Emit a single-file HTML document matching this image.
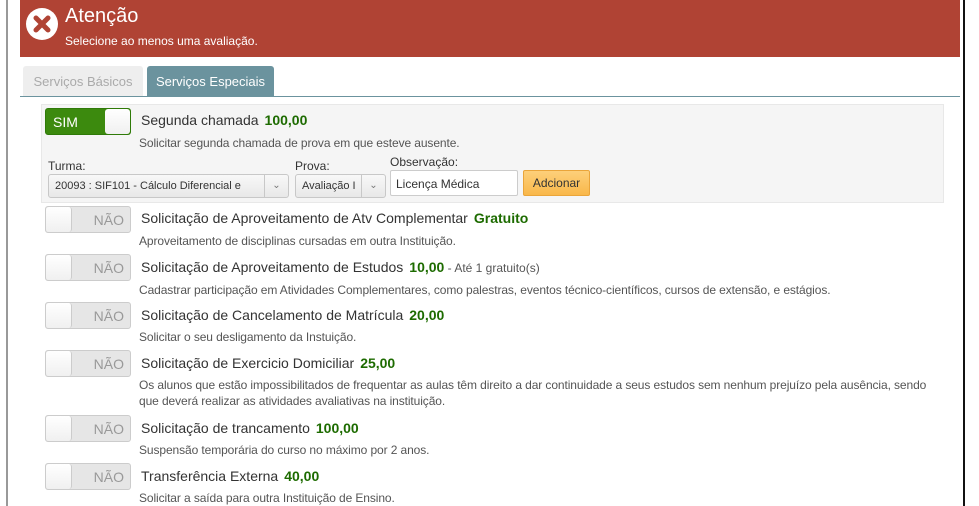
<!DOCTYPE html>
<html><head><meta charset="utf-8"><style>
*{margin:0;padding:0;box-sizing:border-box}
body{width:979px;height:506px;overflow:hidden;background:#fff;font-family:"Liberation Sans",sans-serif;position:relative;color:#333}
.a{position:absolute}
.t{font-size:14px;color:#333;white-space:nowrap}
.p{color:#1d6b00;font-weight:bold;margin-left:6px}
.d{font-size:12px;color:#555;white-space:nowrap;letter-spacing:-0.1px}
.tg{position:absolute;left:45px;width:86px;height:27px;border:1px solid #ccc;border-radius:3px;background:#e6e6e6}
.tg .k{position:absolute;left:0;top:0;width:26px;height:25px;background:linear-gradient(#fff,#f0f0f0);border-right:1px solid #ccc;border-radius:3px}
.tg span{position:absolute;right:6px;top:5px;font-size:14px;color:#999}
.sel{position:absolute;height:24px;border:1px solid #c8c8c8;border-radius:3px;background:linear-gradient(#f8f8f8,#e8e8e8);font-size:11px;color:#333;padding:5px 0 0 6px;white-space:nowrap;overflow:hidden}
.sel i{position:absolute;right:0;top:0;width:24px;height:22px;border-left:1px solid #c8c8c8;font-style:normal;color:#777;text-align:center;font-size:10px;line-height:22px}
</style></head><body>
<div class="a" style="left:6px;top:0;width:2px;height:506px;background:#999"></div>
<div class="a" style="left:963px;top:0;width:2px;height:506px;background:#111"></div>
<div class="a" style="left:20px;top:0;width:940px;height:57px;background:#b04334"></div>
<svg class="a" style="left:25px;top:7px" width="34" height="34" viewBox="0 0 34 34"><circle cx="17" cy="17" r="16" fill="#fff"/><path d="M11 11L23 23M23 11L11 23" stroke="#b04334" stroke-width="5" stroke-linecap="round"/></svg>
<div class="a" style="left:65px;top:5px;font-size:20px;color:#fff">Atenção</div>
<div class="a" style="left:65px;top:34px;font-size:12px;color:#fff">Selecione ao menos uma avaliação.</div>
<div class="a" style="left:23px;top:66px;width:120px;height:31px;background:#eee;border-radius:3px 3px 0 0;font-size:13px;color:#aaa;text-align:center;line-height:31px">Serviços Básicos</div>
<div class="a" style="left:147px;top:66px;width:127px;height:31px;background:#6b939e;border-radius:3px 3px 0 0;font-size:13px;color:#fff;text-align:center;line-height:31px">Serviços Especiais</div>
<div class="a" style="left:20px;top:96px;width:940px;height:1px;background:#6b939e"></div>
<div class="a" style="left:41px;top:104px;width:903px;height:99px;background:#f5f5f5;border:1px solid #e8e8e8"></div>
<div class="a" style="left:45px;top:108px;width:86px;height:27px;background:#3c8a0e;border:1px solid #2f7a08;border-radius:3px"><span style="position:absolute;left:7px;top:5px;color:#fff;font-size:14px">SIM</span><div style="position:absolute;right:0;top:0;width:25px;height:25px;background:linear-gradient(#fff,#f0f0f0);border-radius:3px"></div></div>
<div class="a t" style="left:141px;top:112px">Segunda chamada<span class="p">100,00</span></div>
<div class="a d" style="left:139px;top:136px">Solicitar segunda chamada de prova em que esteve ausente.</div>
<div class="a" style="left:48px;top:159px;font-size:12px">Turma:</div>
<div class="sel" style="left:48px;top:174px;width:241px">20093 : SIF101 - Cálculo Diferencial e<i>&#8964;</i></div>
<div class="a" style="left:295px;top:159px;font-size:12px">Prova:</div>
<div class="sel" style="left:295px;top:174px;width:91px">Avaliação I<i>&#8964;</i></div>
<div class="a" style="left:390px;top:155px;font-size:12px">Observação:</div>
<div class="a" style="left:390px;top:170px;width:128px;height:26px;background:#fff;border:1px solid #ccc;border-radius:2px;font-size:12px;padding:6px 0 0 5px">Licença Médica</div>
<div class="a" style="left:523px;top:170px;width:67px;height:26px;background:linear-gradient(#fdd07a,#f9b84a);border:1px solid #eaa53a;border-radius:2px;font-size:12px;text-align:center;line-height:24px">Adcionar</div>

<div class="tg" style="top:206px"><div class="k"></div><span>NÃO</span></div>
<div class="a t" style="left:141px;top:210px">Solicitação de Aproveitamento de Atv Complementar<span class="p">Gratuito</span></div>
<div class="a d" style="left:139px;top:234px">Aproveitamento de disciplinas cursadas em outra Instituição.</div>

<div class="tg" style="top:254px"><div class="k"></div><span>NÃO</span></div>
<div class="a t" style="left:141px;top:259px">Solicitação de Aproveitamento de Estudos<span class="p">10,00</span><span style="font-size:12px;color:#555"> - Até 1 gratuito(s)</span></div>
<div class="a d" style="left:139px;top:283px">Cadastrar participação em Atividades Complementares, como palestras, eventos técnico-científicos, cursos de extensão, e estágios.</div>

<div class="tg" style="top:302px"><div class="k"></div><span>NÃO</span></div>
<div class="a t" style="left:141px;top:307px">Solicitação de Cancelamento de Matrícula<span class="p">20,00</span></div>
<div class="a d" style="left:139px;top:330px">Solicitar o seu desligamento da Instuição.</div>

<div class="tg" style="top:350px"><div class="k"></div><span>NÃO</span></div>
<div class="a t" style="left:141px;top:355px">Solicitação de Exercicio Domiciliar<span class="p">25,00</span></div>
<div class="a d" style="left:139px;top:378px">Os alunos que estão impossibilitados de frequentar as aulas têm direito a dar continuidade a seus estudos sem nenhum prejuízo pela ausência, sendo</div>
<div class="a d" style="left:139px;top:394px">que deverá realizar as atividades avaliativas na instituição.</div>

<div class="tg" style="top:415px"><div class="k"></div><span>NÃO</span></div>
<div class="a t" style="left:141px;top:420px">Solicitação de trancamento<span class="p">100,00</span></div>
<div class="a d" style="left:139px;top:443px">Suspensão temporária do curso no máximo por 2 anos.</div>

<div class="tg" style="top:463px"><div class="k"></div><span>NÃO</span></div>
<div class="a t" style="left:141px;top:468px">Transferência Externa<span class="p">40,00</span></div>
<div class="a d" style="left:139px;top:491px">Solicitar a saída para outra Instituição de Ensino.</div>
</body></html>
